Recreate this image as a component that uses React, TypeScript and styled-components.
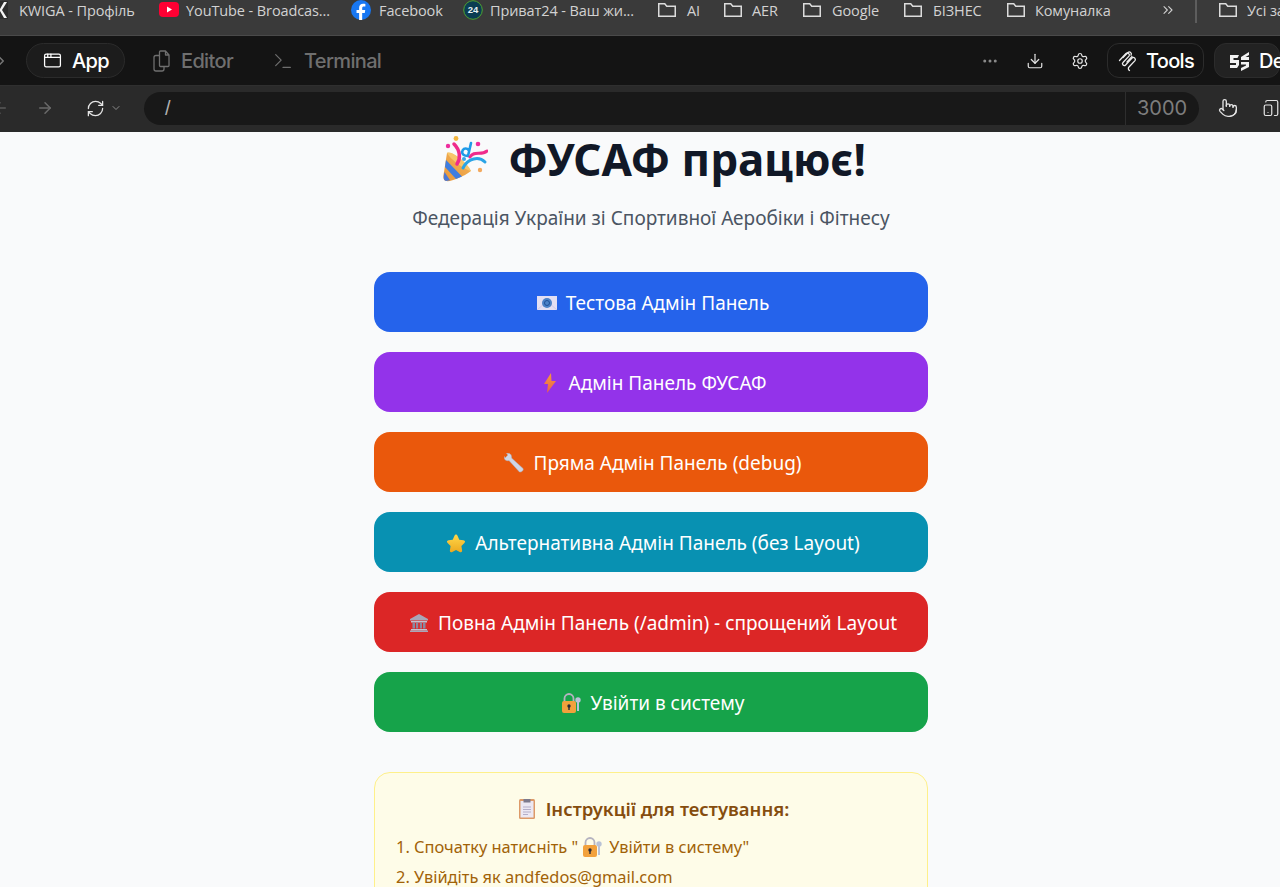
import React from "react";
import styled, { createGlobalStyle } from "styled-components";
import { AppWindow, Terminal, Download, Settings, Pointer, RefreshCw, ChevronDown, ChevronsRight, ChevronRight, Ellipsis, ArrowLeft, ArrowRight, TabletSmartphone } from "lucide-react";

const Global = createGlobalStyle`
  html, body { margin: 0; padding: 0; height: 100%; background: #f9fafb; }
  body { font-family: "Noto Sans", "Open Sans", sans-serif; overflow: hidden; }
  * { box-sizing: border-box; }
`;
const Shell = styled.div`width: 1280px; height: 887px; overflow: hidden; display: flex; flex-direction: column;`;
const BookmarksBar = styled.div`
  height: 36px; flex: none; background: #3a3a3a; border-bottom: 1px solid #4a4a4a;
  display: flex; align-items: center; padding-bottom: 15px; overflow: hidden;
`;
const Bookmark = styled.div<{ $w: number; $gap: number }>`
  flex: none; width: ${p => p.$w}px; display: flex; align-items: center; gap: ${p => p.$gap}px;
  color: #d2d2d2; font-size: 14.5px; white-space: nowrap; letter-spacing: -0.1px;
  font-family: "Open Sans", sans-serif;
  svg { flex: none; }
`;
const BookmarkLabel = styled.span``;
const Chevrons = styled.div`flex: none; width: 35px; color: #d0d0d0; display: flex;`;
const Separator = styled.div`flex: none; width: 2px; height: 26px; background: #5d5d5d; margin-right: 21px;`;
const TabBar = styled.div`
  height: 50px; flex: none; background: #141414; border-bottom: 1px solid #2f2f2f;
  display: flex; align-items: center; overflow: hidden; font-family: Inter, sans-serif;
`;
const LeftChevron = styled.div`flex: none; width: 26px; margin-left: -8px; margin-right: 8px; color: #777; display: flex;`;
const Tab = styled.div<{ $active?: boolean; $w: number; $pad: number; $gap: number }>`
  flex: none; width: ${p => p.$w}px; height: 35px; border-radius: 18px; display: flex; align-items: center; gap: ${p => p.$gap}px;
  padding-left: ${p => p.$pad}px; font-size: 20px; font-weight: 500; letter-spacing: -0.65px;
  color: ${p => p.$active ? "#fff" : "#6f6f6f"};
  background: ${p => p.$active ? "#1c1c1c" : "transparent"};
  border: 1px solid ${p => p.$active ? "#2b2b2b" : "transparent"};
  svg { flex: none; }
`;
const Spring = styled.div`flex: 1;`;
const ToolIcon = styled.div<{ $w: number; $c?: string }>`flex: none; width: ${p => p.$w}px; display: flex; justify-content: center; color: ${p => p.$c || "#e4e4e4"};`;
const ToolGap = styled.div`flex: none; width: 5px;`;
const PillButton = styled.div<{ $w: number; $fill?: boolean }>`
  flex: none; width: ${p => p.$w}px; height: 35px; border-radius: 12px; display: flex; align-items: center;
  gap: ${p => p.$fill ? 9 : 8}px; padding-left: ${p => p.$fill ? 15 : 10}px; margin-left: ${p => p.$fill ? 10 : 0}px;
  border: 1px solid #2c2c2c; color: #fff; font-size: 20px; font-weight: 500; letter-spacing: -0.7px; white-space: nowrap;
  background: ${p => p.$fill ? "#222" : "transparent"};
  svg { flex: none; }
`;
const UrlBar = styled.div`
  height: 46px; flex: none; background: #2a2a2a; display: flex; align-items: center; overflow: hidden; padding-bottom: 2px;
`;
const UrlField = styled.div`
  flex: none; width: 1055px; height: 33px; background: #181818; border-radius: 17px; display: flex; align-items: stretch; margin-left: 12px;
`;
const UrlPath = styled.div`flex: 1; color: #b0b0b0; font: 400 20px/33px "Liberation Sans", sans-serif; padding-left: 21px;`;
const Port = styled.div`width: 74px; border-left: 1px solid #2e2e2e; color: #7d7d7d; font: 400 20px/33px Inter, sans-serif; padding-left: 11px;`;
const Refresh = styled.div`flex: none; display: flex; align-items: center; gap: 5px; color: #e6e6e6; width: 46px; padding-left: 0;`;
const Page = styled.main`
  flex: 1; background: #f9fafb; display: flex; flex-direction: column; align-items: center; overflow: hidden; padding-left: 22px;
`;
const Title = styled.h1`
  margin: 0; height: 54px; display: flex; align-items: center; justify-content: center; flex: none;
  font-size: 44px; line-height: 54px; font-weight: 700; color: #111827; white-space: nowrap;
  svg { margin: 0 20px 0 7px; }
`;
const Subtitle = styled.p`margin: 18px 0 0; font-size: 19px; line-height: 28px; color: #4b5563; height: 28px;`;
const Actions = styled.div`width: 554px; margin-top: 40px; display: flex; flex-direction: column; gap: 20px; flex: none;`;
const Action = styled.a<{ $bg: string }>`
  height: 60px; padding-top: 2px; border-radius: 16px; background: ${p => p.$bg}; color: #fff; font-size: 19px; font-weight: 400;
  display: flex; align-items: center; justify-content: center; white-space: nowrap;
`;
const EmojiSlot = styled.span<{ $after?: number }>`
  display: inline-flex; flex: none; margin: 0 ${p => p.$after ?? 9}px 0 4px; width: 20px; height: 20px; align-items: center; justify-content: center;
`;
const Notice = styled.section`
  width: 554px; margin-top: 40px; flex: none; background: #fefce8; border: 1px solid #fef08a; border-radius: 16px; padding: 23px 21px;
`;
const NoticeTitle = styled.h3`
  margin: 0; font-size: 18.5px; font-weight: 600; line-height: 26px; color: #854d0e; text-align: center;
  display: flex; justify-content: center; align-items: center;
`;
const Steps = styled.ol`margin: 10px 0 0; padding: 0; list-style: none; color: #a16207; font-size: 16.4px; line-height: 30px;`;
const Step = styled.li`display: flex; align-items: center; white-space: nowrap;`;

const Folder = () => (
  <svg width="20" height="16" viewBox="0 0 20 16" fill="none" stroke="#dcdcdc" strokeWidth="1.5"><path d="M1.750 1.750h6l2 2.500h8.500v10H1.750z" /></svg>
);
const Kwiga = () => (
  <svg width="8" height="18" viewBox="0 0 8 18"><rect width="8" height="18" fill="#2c2c2c" /><path d="M7 1 2 9l5 8H4L0 10V8l4-7z" fill="#f4f4f4" /></svg>
);
const YouTube = () => (
  <svg width="20" height="16" viewBox="0 0 20 16"><rect x="0" y="0" width="20" height="15" rx="4" fill="#ff0033" /><path d="M8 4.500v6l5-3z" fill="#fff" /></svg>
);
const Facebook = () => (
  <svg width="20" height="20" viewBox="0 0 17 17"><circle cx="8.500" cy="8.500" r="8.500" fill="#1877f2" /><path d="M9.500 17v-6h2.200l.4-2.600H9.500V6.900c0-.8.3-1.300 1.400-1.300h1.300V3.300c-.6-.1-1.300-.2-1.900-.2-2 0-3.400 1.200-3.400 3.400v1.900H4.700V11h2.200v6z" fill="#fff" /></svg>
);
const Privat = () => (
  <svg width="20" height="20" viewBox="0 0 20 20"><circle cx="10" cy="10" r="9.300" fill="#0b3d52" stroke="#4ea331" /><text x="10" y="13.400" textAnchor="middle" fontSize="9.500" fontWeight="700" fill="#e8f2f2" fontFamily="Liberation Sans">24</text></svg>
);
const FilesGlyph = () => (
  <svg width="17" height="22" viewBox="0 0 17 22" fill="none" stroke="#6f6f6f" strokeWidth="1.300" strokeLinejoin="round"><path d="M7.500 1h5l3.500 4v10.500a1 1 0 0 1-1 1H7.500a1 1 0 0 1-1-1V2a1 1 0 0 1 1-1zM12.500 1v4H16" /><path d="M6.500 5.500H3a2 2 0 0 0-2 2V19a2 2 0 0 0 2 2h6a2 2 0 0 0 2-2v-2.500" /></svg>
);
const ToolsGlyph = () => (
  <svg width="20" height="22" viewBox="0 0 20 22" fill="none" stroke="#eee" strokeWidth="1.300" strokeLinecap="round" strokeLinejoin="round"><path d="M1.500 10.500 8 3.500a2 2 0 0 1 3 2.600L5 12.500a1.800 1.800 0 0 0 2.600 2.500L14 8a2 2 0 0 1 3 2.600L11 17c-1 1-.8 2.600.5 3.500" /><path d="M5 7.500 10 2.500a2 2 0 0 1 3 2.600M9 12l5-5.500" /></svg>
);
const DevGlyph = () => (
  <svg width="20" height="22" viewBox="0 0 20 22" fill="#f2f2f2"><path d="M0 5h9l-1.500 3H3.500v2H9v5l-2 3H0v-3h6v-2H0zM11 7l8-5v3l-3.500 2H19v3h-8zM11 12h8v5l-8 4v-3l5-2.500V14.500h-5z" /></svg>
);
const Popper = () => (
  <svg width="45" height="46" viewBox="0 0 45 46">
    <defs><linearGradient id="cone" x1="0" y1="1" x2="1" y2="0"><stop offset="0" stopColor="#e9973a" /><stop offset="1" stopColor="#f3b45a" /></linearGradient></defs>
    <path d="M4 17 C10 15 24 28 28 35 C20 41 8 46 3 45 C0 44 0 41 1 36z" fill="url(#cone)" />
    <path d="M3 24 L19 40.500 L13 43 L2 31z" fill="#3f7de0" />
    <path d="M1.500 36 L7 44.300 L3 45 C0 44 .5 41 1.500 36z" fill="#4a78d8" />
    <path d="M4 17 C8 14 24 26 28 35 C22 34 8 24 4 17z" fill="#f7c66b" />
    <circle cx="13" cy="2.500" r="2.400" fill="#f4b63f" /><circle cx="5" cy="10" r="2.200" fill="#ee2e9e" /><circle cx="35" cy="8" r="2.300" fill="#ee2e9e" />
    <circle cx="37" cy="34" r="2.200" fill="#f3a95e" /><circle cx="21" cy="23" r="2" fill="#3ba5e8" />
    <path d="M11 8 C17 14 18 22 14 28" fill="none" stroke="#ef2b8b" strokeWidth="3.500" strokeLinecap="round" />
    <path d="M28 7 L25 20 M25.500 14 A3.500 3.500 0 1 0 22 19.500 L25 20" fill="none" stroke="#1f9be8" strokeWidth="2.600" strokeLinecap="round" />
    <path d="M27 21 C31 14 38 20 44 15" fill="none" stroke="#ef2b8b" strokeWidth="3" strokeLinecap="round" />
    <path d="M20 32 C25 22 36 20 42 26" fill="none" stroke="#2aa4e6" strokeWidth="3" strokeLinecap="round" />
  </svg>
);
const Envelope = () => (
  <svg width="20" height="14" viewBox="0 0 20 14"><rect width="20" height="14" fill="#e3dff3" /><path d="M0 14 8 7M20 14 12 7" stroke="#cfc8e8" /><circle cx="10" cy="7" r="5" fill="#4b82c8" /><circle cx="10" cy="7" r="2.500" fill="none" stroke="#1f4f96" /></svg>
);
const Bolt = () => (
  <svg width="12" height="20" viewBox="0 0 12 20"><defs><linearGradient id="bolt" x1="0" y1="0" x2="0" y2="1"><stop offset="0" stopColor="#f79a3c" /><stop offset="1" stopColor="#e85d50" /></linearGradient></defs><path d="M7 0 0 11h4l-1 9 9-12H7.500z" fill="url(#bolt)" /></svg>
);
const Wrench = () => (
  <svg width="20" height="20" viewBox="0 0 20 20"><path d="M1 5 4 2 2.500.5C5-.5 8 1 7.500 5L19 15.500c1 1.500-1.500 4-3.500 3.500L5 7.500C2 8.500-.5 6 .5 3.500z" fill="#cfd6e6" stroke="#aab2c8" strokeWidth=".5" /></svg>
);
const Star = () => (
  <svg width="21" height="21" viewBox="0 0 20 20"><defs><linearGradient id="star" x1="0" y1="0" x2="0" y2="1"><stop offset="0" stopColor="#ffd84a" /><stop offset="1" stopColor="#eda91f" /></linearGradient></defs><path d="M10 1c.8 0 1.200.6 1.500 1.300l1.800 3.900 4.200.6c1.700.3 2 1.600.9 2.600l-3 3 .7 4.300c.3 1.700-1 2.500-2.400 1.700L10 16.400l-3.700 2c-1.400.8-2.700 0-2.400-1.700l.7-4.300-3-3c-1.100-1-.8-2.300.9-2.600l4.200-.6 1.800-3.900C8.800 1.600 9.200 1 10 1z" fill="url(#star)" /></svg>
);
const Bank = () => (
  <svg width="20" height="20" viewBox="0 0 20 20"><path d="M10 1 19 6v1.500H1V6z" fill="#a9a6b8" /><rect x="2" y="8" width="16" height="1.500" fill="#c4c2cf" /><path d="M3.500 9.500h2.500v6H3.500zM7 9.500h2.200v6H7zM10.800 9.500H13v6h-2.200zM14 9.500h2.500v6H14z" fill="#8b88a0" /><rect x="2" y="16" width="16" height="1.500" fill="#c4c2cf" /><rect x="1" y="17.500" width="18" height="1.500" fill="#a9a6b8" /></svg>
);
const Lock = () => (
  <svg width="20" height="20" viewBox="0 0 20 20"><path d="M3.500 9V5.500a4.500 4.500 0 0 1 9 0V9" fill="none" stroke="#b5b3c0" strokeWidth="1.800" /><rect x="1" y="8" width="14" height="12" rx="2" fill="#f2a13c" /><circle cx="8" cy="13" r="1.700" fill="#2b2b36" /><rect x="7.300" y="13" width="1.400" height="4" fill="#2b2b36" /><circle cx="17" cy="7" r="2.700" fill="#b9c2d6" /><rect x="16" y="8" width="2" height="10" fill="#b9c2d6" /></svg>
);
const Clipboard = () => (
  <svg width="16" height="20" viewBox="0 0 16 20"><rect width="16" height="20" x="0" y="0" rx="1.500" fill="#dd9a68" /><rect x="1.500" y="2" width="13" height="16.500" fill="#ece8f2" /><path d="M4 8h8M4 10.500h8M4 13h8M4 15.500h5" stroke="#b4aec8" /><rect x="4.500" y="0" width="7" height="3.500" fill="#7d7a8c" /></svg>
);

const bookmarks = [
  { w: 159, gap: 11, icon: <Kwiga />, label: "KWIGA - Профіль" },
  { w: 192, gap: 7, icon: <YouTube />, label: "YouTube - Broadcas..." },
  { w: 112, gap: 8, icon: <Facebook />, label: "Facebook" },
  { w: 194, gap: 7, icon: <Privat />, label: "Приват24 - Ваш жи..." },
  { w: 66, gap: 10, icon: <Folder />, label: "AI" },
  { w: 79, gap: 9, icon: <Folder />, label: "AER" },
  { w: 101, gap: 10, icon: <Folder />, label: "Google" },
  { w: 103, gap: 10, icon: <Folder />, label: "БІЗНЕС" },
  { w: 154, gap: 9, icon: <Folder />, label: "Комуналка" },
];
const actions = [
  { bg: "#2563eb", icon: <Envelope />, label: "Тестова Адмін Панель" },
  { bg: "#9333ea", icon: <Bolt />, label: "Адмін Панель ФУСАФ" },
  { bg: "#ea580c", icon: <Wrench />, label: "Пряма Адмін Панель (debug)" },
  { bg: "#0891b2", icon: <Star />, label: "Альтернативна Адмін Панель (без Layout)" },
  { bg: "#dc2626", icon: <Bank />, label: "Повна Адмін Панель (/admin) - спрощений Layout" },
  { bg: "#16a34a", icon: <Lock />, label: "Увійти в систему" },
];

export default function App() {
  return (
    <Shell>
      <Global />
      <BookmarksBar>
        {bookmarks.map(b => (
          <Bookmark key={b.label} $w={b.w} $gap={b.gap}>{b.icon}<BookmarkLabel>{b.label}</BookmarkLabel></Bookmark>
        ))}
        <Chevrons><ChevronsRight size={16} strokeWidth={1.6} /></Chevrons>
        <Separator />
        <Bookmark $w={70} $gap={9}><Folder /><BookmarkLabel>Усі закладки</BookmarkLabel></Bookmark>
      </BookmarksBar>
      <TabBar>
        <LeftChevron><ChevronRight size={18} /></LeftChevron>
        <Tab $active $w={99} $pad={16} $gap={10}><AppWindow size={19} strokeWidth={1.6} />App</Tab>
        <Tab $w={124} $pad={27} $gap={11}><FilesGlyph />Editor</Tab>
        <Tab $w={130} $pad={22} $gap={10}><Terminal size={22} strokeWidth={1.3} />Terminal</Tab>
        <Spring />
        <ToolIcon $w={45} $c="#8a8a8a"><Ellipsis size={18} /></ToolIcon>
        <ToolIcon $w={45}><Download size={18} strokeWidth={1.6} /></ToolIcon>
        <ToolIcon $w={45}><Settings size={18} strokeWidth={1.6} /></ToolIcon>
        <ToolGap />
        <PillButton $w={97}><ToolsGlyph />Tools</PillButton>
        <PillButton $w={66} $fill><DevGlyph />De</PillButton>
      </TabBar>
      <UrlBar>
        <ToolIcon $w={36} $c="#5a5a5a"><ArrowLeft size={18} style={{ marginLeft: -36 }} /></ToolIcon>
        <ToolIcon $w={18} $c="#6a6a6a"><ArrowRight size={18} /></ToolIcon>
        <ToolIcon $w={32} />
        <Refresh><RefreshCw size={19} strokeWidth={1.6} /><ChevronDown size={12} color="#8a8a8a" /></Refresh>
        <UrlField>
          <UrlPath>/</UrlPath>
          <Port>3000</Port>
        </UrlField>
        <ToolIcon $w={58}><Pointer size={20} strokeWidth={1.6} /></ToolIcon>
        <ToolIcon $w={28}><TabletSmartphone size={18} strokeWidth={1.6} /></ToolIcon>
      </UrlBar>
      <Page>
        <Title><Popper />ФУСАФ працює!</Title>
        <Subtitle>Федерація України зі Спортивної Аеробіки і Фітнесу</Subtitle>
        <Actions>
          {actions.map(a => (
            <Action key={a.label} $bg={a.bg}><EmojiSlot>{a.icon}</EmojiSlot>{a.label}</Action>
          ))}
        </Actions>
        <Notice>
          <NoticeTitle><EmojiSlot><Clipboard /></EmojiSlot>Інструкції для тестування:</NoticeTitle>
          <Steps>
            <Step>1. Спочатку натисніть "<EmojiSlot $after={7}><Lock /></EmojiSlot>Увійти в систему"</Step>
            <Step>2. Увійдіть як andfedos@gmail.com</Step>
          </Steps>
        </Notice>
      </Page>
    </Shell>
  );
}
